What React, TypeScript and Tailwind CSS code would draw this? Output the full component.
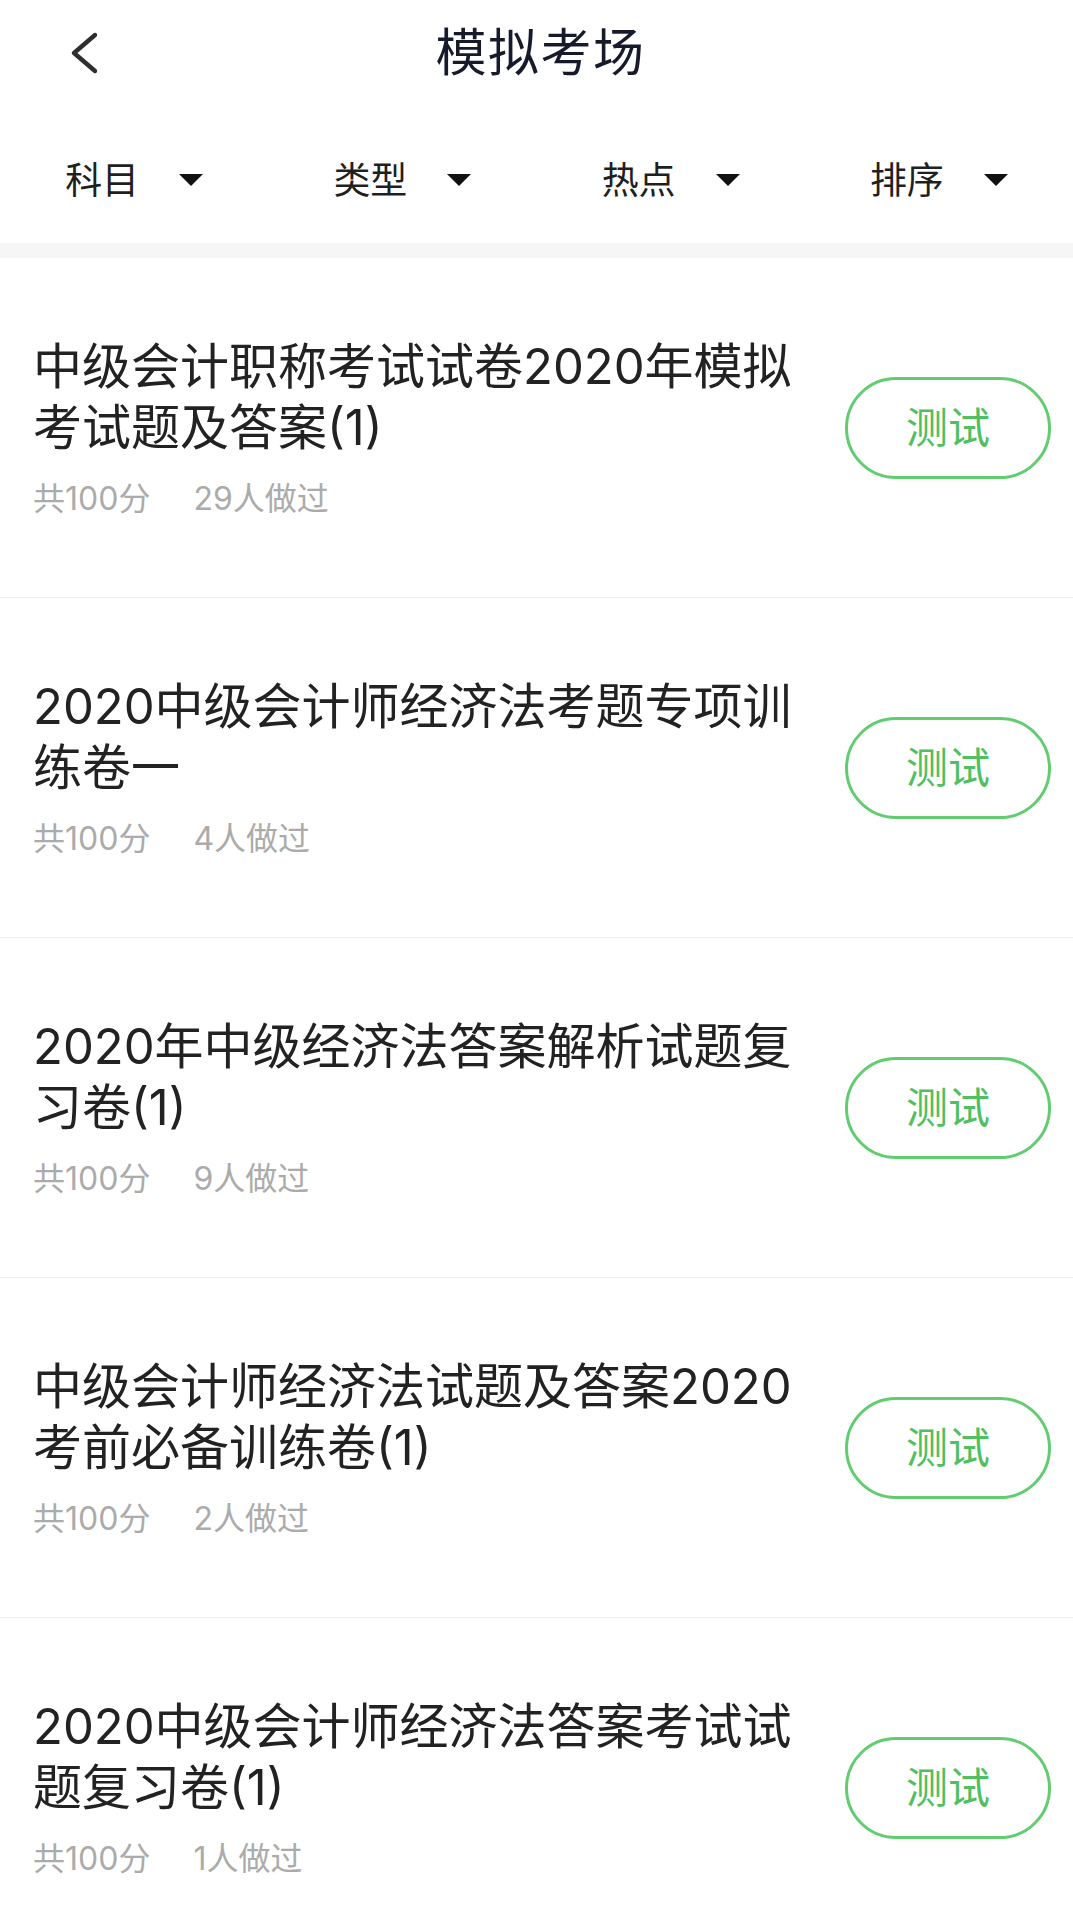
import React from "react";

const items = [
  { title: "中级会计职称考试试卷2020年模拟考试题及答案(1)", score: "共100分", done: "29人做过" },
  { title: "2020中级会计师经济法考题专项训练卷一", score: "共100分", done: "4人做过" },
  { title: "2020年中级经济法答案解析试题复习卷(1)", score: "共100分", done: "9人做过" },
  { title: "中级会计师经济法试题及答案2020考前必备训练卷(1)", score: "共100分", done: "2人做过" },
  { title: "2020中级会计师经济法答案考试试题复习卷(1)", score: "共100分", done: "1人做过" },
];

const filters = ["科目", "类型", "热点", "排序"];

function Caret() {
  return (
    <svg width="24" height="12" viewBox="0 0 24 12" className="shrink-0">
      <polygon points="0,0 24,0 12,12" fill="#111111" />
    </svg>
  );
}

export default function App() {
  return (
    <div className="w-[1073px] h-[1913px] overflow-hidden bg-white font-['Inter','Noto_Sans_CJK_SC',sans-serif]">
      {/* Nav bar */}
      <div className="relative h-[104px] flex items-center justify-center">
        <div className="absolute left-[68px] top-[31px]">
          <svg width="32" height="44" viewBox="0 0 32 44">
            <polyline
              points="27,4 6,22 27,40"
              fill="none"
              stroke="#2e2e2e"
              strokeWidth="4.4"
              strokeLinecap="round"
              strokeLinejoin="round"
            />
          </svg>
        </div>
        <div className="pl-[8px] text-[51px] leading-none text-[#161a2b] tracking-[1.5px]">模拟考场</div>
      </div>

      {/* Filter row */}
      <div className="h-[139px] pt-[13px] grid grid-cols-4">
        {filters.map((f) => (
          <div key={f} className="flex items-center justify-center gap-[40px]">
            <span className="text-[37px] leading-none text-[#1f1f1f]">{f}</span>
            <Caret />
          </div>
        ))}
      </div>

      <div className="h-[15px] bg-[#f6f6f6]" />

      {/* List */}
      <div className="flex flex-col">
        {items.map((it, i) => (
          <div
            key={i}
            className="h-[340px] shrink-0 border-b border-[#efefef] flex items-center justify-between pl-[33px] pr-[22px]"
          >
            <div className="w-[780px]">
              <div className="text-[49px] leading-[61px] text-[#222222]">{it.title}</div>
              <div className="mt-[21px] flex items-center gap-[43px] text-[32px] leading-[40px] text-[#ababab]">
                <span>{it.score}</span>
                <span>{it.done}</span>
              </div>
            </div>
            <div className="w-[206px] h-[102px] shrink-0 rounded-full border-[3px] border-[#62cc70] flex items-center justify-center">
              <span className="text-[42px] leading-none text-[#4fc05f]">测试</span>
            </div>
          </div>
        ))}
      </div>
    </div>
  );
}
